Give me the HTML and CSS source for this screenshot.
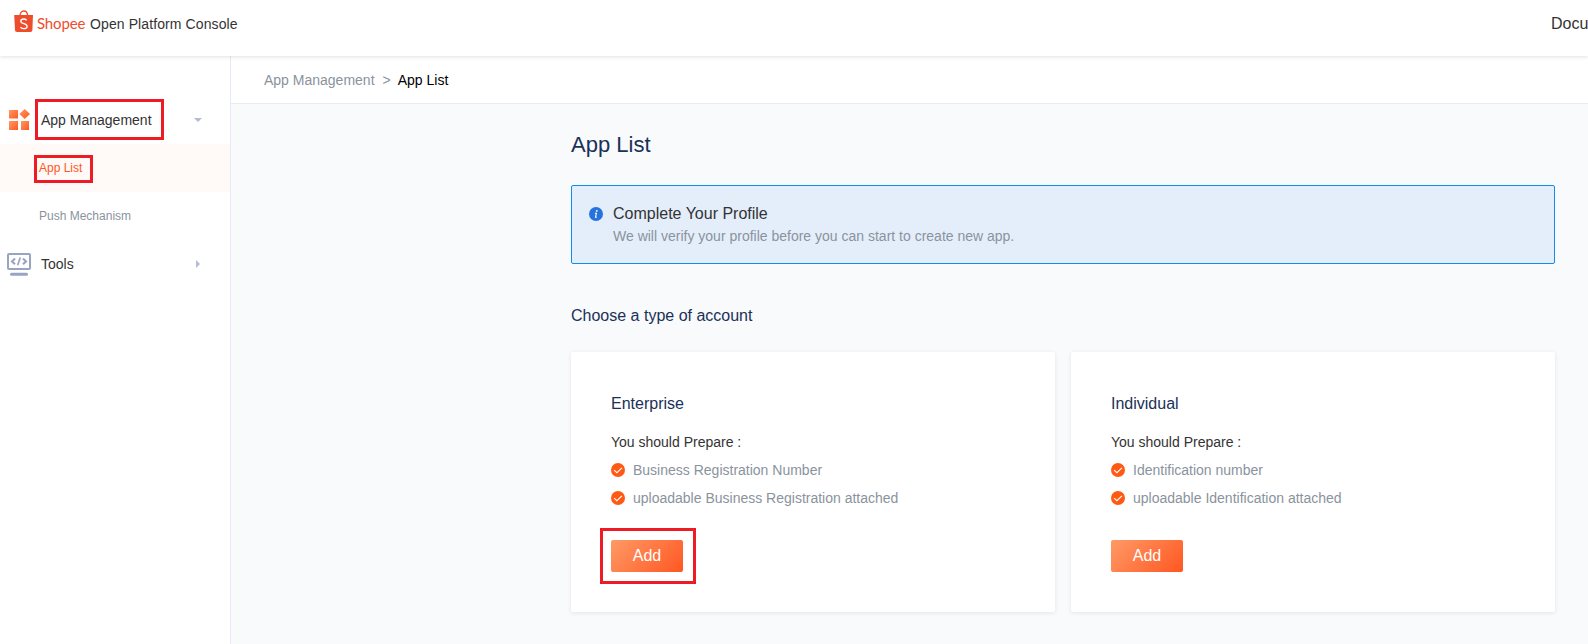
FILE: index.html
```html
<!DOCTYPE html>
<html lang="en">
<head>
<meta charset="utf-8">
<title>Shopee Open Platform Console</title>
<link rel="stylesheet" href="styles.css">
</head>
<body>
<svg class="defs" width="0" height="0" aria-hidden="true">
  <defs>
    <linearGradient id="orange" x1="0" y1="0" x2="1" y2="1"><stop offset="0" stop-color="#ff9a62"/><stop offset="1" stop-color="#ff5722"/></linearGradient>
    <symbol id="check" viewBox="0 0 14 14"><circle cx="7" cy="7" r="7" fill="#ff5a14"/><path d="M3.100 7.200l2.800 2.500 5-4.900" fill="none" stroke="#fff" stroke-width="1.100"/></symbol>
  </defs>
</svg>
<header class="header">
  <div class="brand">
    <svg class="bag" width="20" height="23" viewBox="0 0 20 23"><path d="M6 6C6 3 7.500 1 9.800 1s3.800 2 3.800 5" fill="none" stroke="#ee4d2d" stroke-width="1.300"/><path d="M.2 5h18.800l-.6 15.100c-.1 1.300-.8 1.900-2 1.900H3c-1.200 0-1.900-.6-2-1.900z" fill="#ee4d2d"/><path d="M12.600 10.200C11.700 9.300 10.700 9 9.700 9c-1.700 0-2.900.9-2.900 2.200 0 3.100 6.300 1.700 6.300 5 0 1.500-1.300 2.500-3.200 2.500-1.300 0-2.500-.5-3.500-1.400" fill="none" stroke="#fff" stroke-width="1.300"/></svg>
    <span class="wordmark">Shopee</span>
    <span class="product">Open Platform Console</span>
  </div>
  <a class="docs">Docu</a>
</header>
<div class="shell">
  <nav class="sidebar">
    <div class="group">
      <svg class="group-icon" width="24" height="24" viewBox="0 0 24 24"><g fill="url(#orange)"><path d="M2 2h9v8.500H2z" /><path d="M2 13h9v9H2z"/><path d="M14 13h8v9h-8z"/><path d="M17.700 1l5.300 5-5.300 5-5.300-5z"/></g></svg>
      <span class="group-name mark mark-app">App Management</span>
      <i class="caret caret-down"></i>
    </div>
    <a class="item active"><span class="mark mark-list">App List</span></a>
    <a class="item">Push Mechanism</a>
    <div class="group">
      <svg class="group-icon" width="24" height="24" viewBox="0 0 24 24" fill="none" stroke="#99a3c4"><rect x="1" y="2" width="22" height="15" rx="1" stroke-width="2"/><path d="M8 6.500L5 9.400l3 2.900M16 6.500l3 2.900-3 2.900" stroke-width="2.100"/><path d="M13.300 5.500l-2.600 7.800" stroke-width="1.700"/><path d="M4.500 22.300h15" stroke-width="3" stroke-linecap="round"/></svg>
      <span class="group-name">Tools</span>
      <i class="caret caret-right"></i>
    </div>
  </nav>
  <main class="main">
    <div class="crumbs"><span>App Management</span><span class="sep">&gt;</span><span class="current">App List</span></div>
    <div class="content">
      <h1 class="title">App List</h1>
      <section class="notice">
        <svg class="info" width="14" height="14" viewBox="0 0 14 14"><circle cx="7" cy="7" r="7" fill="#2673dd"/><circle cx="7.800" cy="3.900" r=".9" fill="#fff"/><path d="M5.900 6.200h1.500L6.500 10.200h1.400" fill="none" stroke="#fff" stroke-width="1.100"/></svg>
        <div>
          <div class="notice-title">Complete Your Profile</div>
          <div class="notice-text">We will verify your profile before you can start to create new app.</div>
        </div>
      </section>
      <h2 class="subtitle">Choose a type of account</h2>
      <div class="cards">
        <section class="card">
          <h3 class="card-title">Enterprise</h3>
          <p class="prepare">You should Prepare :</p>
          <ul class="needs">
            <li><svg width="14" height="14"><use href="#check"/></svg>Business Registration Number</li>
            <li><svg width="14" height="14"><use href="#check"/></svg>uploadable Business Registration attached</li>
          </ul>
          <button class="add mark mark-add">Add</button>
        </section>
        <section class="card">
          <h3 class="card-title">Individual</h3>
          <p class="prepare">You should Prepare :</p>
          <ul class="needs">
            <li><svg width="14" height="14"><use href="#check"/></svg>Identification number</li>
            <li><svg width="14" height="14"><use href="#check"/></svg>uploadable Identification attached</li>
          </ul>
          <button class="add">Add</button>
        </section>
      </div>
    </div>
  </main>
</div>
</body>
</html>
```
FILE: styles.css
```css
*, *::after { box-sizing: border-box; margin: 0; padding: 0; }
body { height: 644px; overflow: hidden; display: flex; flex-direction: column; background: #fff; color: #333; font: 14px/20px "Liberation Sans", Arial, sans-serif; }
.defs { position: absolute; }
.header { position: relative; z-index: 1; flex: none; height: 56px; display: flex; justify-content: space-between; background: #fff; box-shadow: 0 1px 4px rgba(0, 0, 0, .12); }
.brand { display: flex; padding: 10px 0 0 14px; }
.wordmark { margin: 3px 0 0 3px; width: 53px; color: #ee4d2d; font: 15px/20px Lato, sans-serif; letter-spacing: -.15px; white-space: nowrap; }
.product { margin-top: 4px; letter-spacing: .1px; white-space: nowrap; }
.docs { margin-top: 14px; width: 37px; font-size: 16px; overflow: hidden; }
.shell { flex: 1; display: flex; min-height: 0; }
.sidebar { flex: none; width: 231px; padding-top: 40px; border-right: 1px solid #e8eaf4; }
.group { display: flex; align-items: center; height: 48px; padding: 0 28px 0 7px; }
.group-name { flex: none; margin-left: 10px; }
.caret { margin-left: auto; border: 4px solid transparent; }
.caret-down { border-top-color: #b4bbd2; border-bottom: 0; }
.caret-right { border-left-color: #b4bbd2; border-right: 0; margin-right: 2px; }
.item { display: flex; align-items: center; height: 48px; padding-left: 39px; color: #8a939d; font-size: 12px; }
.active { background: #fff9f7; color: #ff5722; }
.mark { position: relative; }
.mark::after { content: ""; position: absolute; border: 3px solid #ed1c24; }
.mark-app::after { left: -6px; top: -11px; width: 129px; height: 41px; }
.mark-list::after { left: -5px; top: -3px; width: 59px; height: 28px; }
.mark-add::after { left: -11px; top: -12px; width: 96px; height: 56px; }
.main { flex: 1; min-width: 0; background: #f9fafc; }
.crumbs { display: flex; align-items: center; height: 48px; padding-left: 33px; background: #fff; border-bottom: 1px solid #e8eaf4; color: #8a939d; }
.sep { margin: 0 7px 0 8px; }
.current { color: #000; }
.content { width: 984px; margin: 26px 0 0 340px; }
.title { color: #1a3158; font-weight: 400; font-size: 22px; line-height: 30px; }
.notice { display: flex; height: 79px; margin-top: 25px; padding: 17px; border: 1px solid #118df0; border-radius: 2px; background: #e4eefb; }
.info { flex: none; margin: 4px 10px 0 0; }
.notice-title { font-size: 16px; line-height: 22px; }
.notice-text { line-height: 22px; color: #8a939d; }
.subtitle { margin-top: 40px; color: #1a3158; font-weight: 400; font-size: 16px; line-height: 24px; }
.cards { display: flex; gap: 16px; margin-top: 24px; }
.card { flex: 1; height: 260px; padding: 40px; background: #fff; border-radius: 2px; box-shadow: 0 1px 4px rgba(30, 40, 60, .1); }
.card-title { color: #1a3158; font-weight: 400; font-size: 16px; line-height: 24px; }
.prepare { margin-top: 16px; }
.needs { display: grid; gap: 8px; margin-top: 8px; list-style: none; color: #8a939d; }
.needs li { display: flex; align-items: center; gap: 8px; }
.add { display: block; width: 72px; height: 32px; margin-top: 32px; border: 0; border-radius: 2px; background: linear-gradient(135deg, #ff9a66, #ff5722); color: #fff; font: 16px/32px "Liberation Sans", Arial, sans-serif; }
```
